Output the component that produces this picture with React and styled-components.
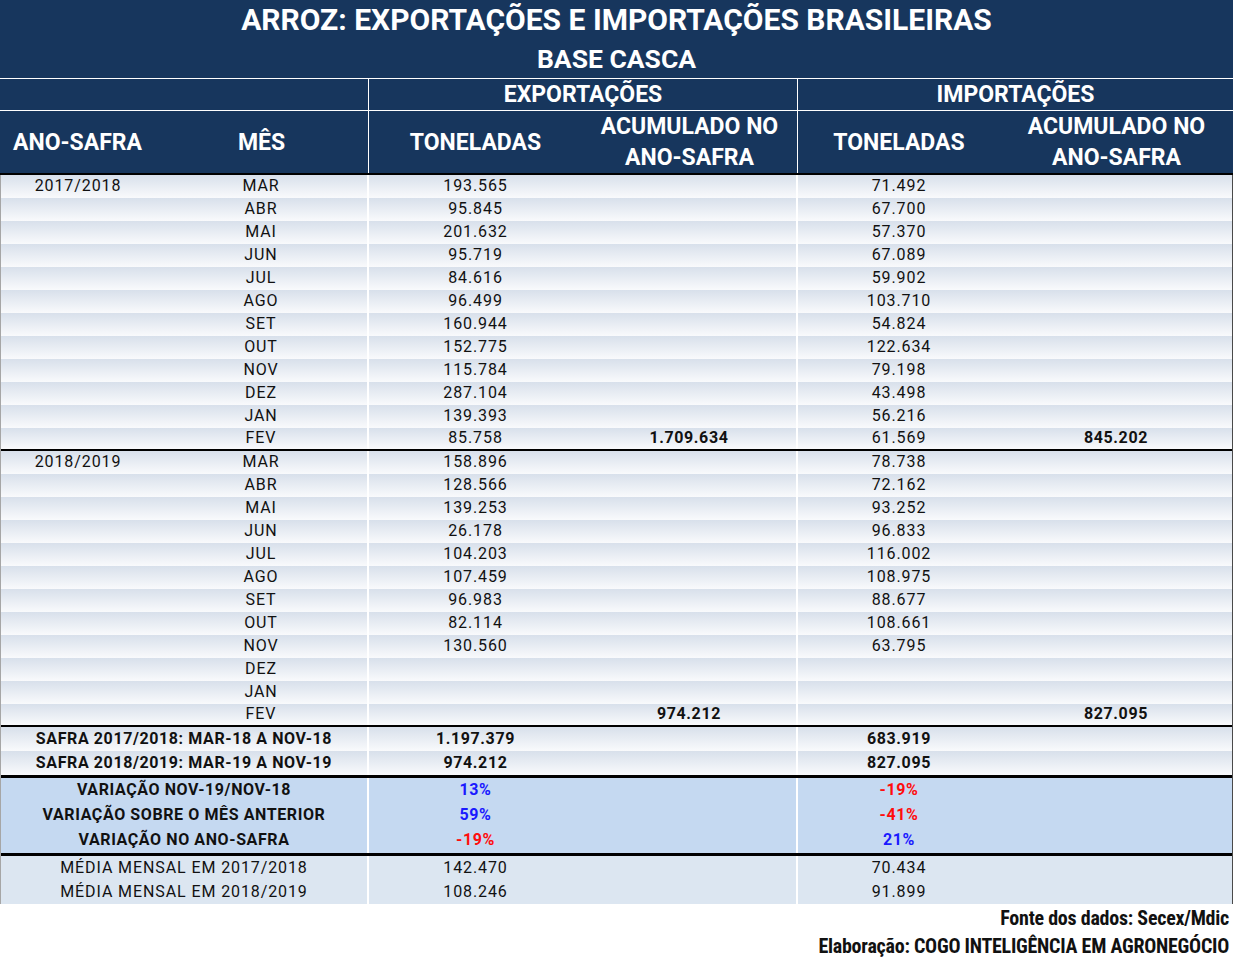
import React from "react";
import styled, { createGlobalStyle, css } from "styled-components";

const GlobalStyle = createGlobalStyle`
  html, body {
    margin: 0;
    padding: 0;
    background: #ffffff;
  }
  body {
    font-family: Roboto, "Liberation Sans", Arial, sans-serif;
    color: #111;
  }
`;

const NAVY = "#17365d";
const COLS = "155px 214px 213px 216px 202px 1fr";

const Sheet = styled.div`
  width: 1233px;
  display: flex;
  flex-direction: column;
`;

const TitleBlock = styled.div`
  background: ${NAVY};
  height: 78px;
  color: #fff;
  display: flex;
  flex-direction: column;
  align-items: center;
  font-weight: 700;
  border-bottom: 1px solid #fff;
`;

const Title = styled.div`
  font-size: 30px;
  line-height: 40px;
`;

const SubTitle = styled.div`
  font-size: 26.5px;
  line-height: 38px;
`;

const HeadRow = styled.div`
  display: grid;
  grid-template-columns: ${COLS};
  background: ${NAVY};
  color: #fff;
  font-weight: 700;
  font-size: 23px;
  height: ${(p) => p.$h}px;
  border-bottom: ${(p) => (p.$dark ? "2px solid #000" : "1px solid #fff")};
`;

const HeadCell = styled.div`
  grid-column: span ${(p) => p.$span || 1};
  display: flex;
  align-items: center;
  justify-content: center;
  text-align: center;
  line-height: 31px;
  border-right: ${(p) => (p.$line ? "1px solid #fff" : "none")};
`;

const Body = styled.div`
  display: flex;
  flex-direction: column;
  border-left: 1px solid #a6a6a6;
  border-right: 1px solid #4a4a4a;
`;

const rowBg = {
  data: css`
    background: linear-gradient(#d8e0eb, #f9fafc);
  `,
  variation: css`
    background: #c5d9f1;
  `,
  media: css`
    background: #dce6f1;
  `,
};

const Row = styled.div`
  display: grid;
  grid-template-columns: 154px 214px 213px 216px 202px 1fr;
  box-sizing: border-box;
  height: ${(p) => p.$h || 23}px;
  font-size: 16px;
  letter-spacing: 0.9px;
  ${(p) => rowBg[p.$kind || "data"]}
  border-bottom: ${(p) => (p.$endLine ? "2px solid #000" : "none")};
`;

const DoubleRule = styled.div`
  height: 3px;
  box-sizing: border-box;
  border-top: 1px solid #000;
  border-bottom: 2px solid #000;
  background: #fff;
`;

const Cell = styled.div`
  grid-column: span ${(p) => p.$span || 1};
  display: flex;
  align-items: center;
  justify-content: center;
  font-weight: ${(p) => (p.$bold ? 700 : 400)};
  color: ${(p) => p.$color || "#111"};
  letter-spacing: ${(p) => (p.$bold ? "0.6px" : "inherit")};
  border-right: ${(p) => (p.$line ? "2px solid #fff" : "none")};
  padding-bottom: 2px;
  box-sizing: border-box;
`;

const Footer = styled.div`
  display: flex;
  flex-direction: column;
  align-items: flex-end;
  padding: 0 4px 0 0;
  font-weight: 700;
  font-size: 20px;
  line-height: 28px;
  color: #111;
  font-stretch: 80%;
  letter-spacing: -0.25px;
`;

const MONTHS = ["MAR", "ABR", "MAI", "JUN", "JUL", "AGO", "SET", "OUT", "NOV", "DEZ", "JAN", "FEV"];

const seasons = [
  {
    year: "2017/2018",
    exp: ["193.565", "95.845", "201.632", "95.719", "84.616", "96.499", "160.944", "152.775", "115.784", "287.104", "139.393", "85.758"],
    imp: ["71.492", "67.700", "57.370", "67.089", "59.902", "103.710", "54.824", "122.634", "79.198", "43.498", "56.216", "61.569"],
    expAcc: "1.709.634",
    impAcc: "845.202",
  },
  {
    year: "2018/2019",
    exp: ["158.896", "128.566", "139.253", "26.178", "104.203", "107.459", "96.983", "82.114", "130.560", "", "", ""],
    imp: ["78.738", "72.162", "93.252", "96.833", "116.002", "108.975", "88.677", "108.661", "63.795", "", "", ""],
    expAcc: "974.212",
    impAcc: "827.095",
  },
];

const BLUE = "#1a1aff";
const RED = "#ff0d0d";

const totals = [
  { label: "SAFRA 2017/2018: MAR-18 A NOV-18", exp: "1.197.379", imp: "683.919" },
  { label: "SAFRA 2018/2019: MAR-19 A NOV-19", exp: "974.212", imp: "827.095" },
];

const variations = [
  { label: "VARIAÇÃO NOV-19/NOV-18", exp: "13%", expC: BLUE, imp: "-19%", impC: RED },
  { label: "VARIAÇÃO SOBRE O MÊS ANTERIOR", exp: "59%", expC: BLUE, imp: "-41%", impC: RED },
  { label: "VARIAÇÃO NO ANO-SAFRA", exp: "-19%", expC: RED, imp: "21%", impC: BLUE },
];

const averages = [
  { label: "MÉDIA MENSAL EM 2017/2018", exp: "142.470", imp: "70.434" },
  { label: "MÉDIA MENSAL EM 2018/2019", exp: "108.246", imp: "91.899" },
];

export default function App() {
  return (
    <>
      <GlobalStyle />
      <Sheet>
        <TitleBlock>
          <Title>ARROZ: EXPORTAÇÕES E IMPORTAÇÕES BRASILEIRAS</Title>
          <SubTitle>BASE CASCA</SubTitle>
        </TitleBlock>

        <HeadRow $h={31}>
          <HeadCell $span={2} $line />
          <HeadCell $span={2} $line>EXPORTAÇÕES</HeadCell>
          <HeadCell $span={2}>IMPORTAÇÕES</HeadCell>
        </HeadRow>
        <HeadRow $h={62} $dark>
          <HeadCell>ANO-SAFRA</HeadCell>
          <HeadCell $line>MÊS</HeadCell>
          <HeadCell>TONELADAS</HeadCell>
          <HeadCell $line>
            ACUMULADO NO
            <br />
            ANO-SAFRA
          </HeadCell>
          <HeadCell>TONELADAS</HeadCell>
          <HeadCell>
            ACUMULADO NO
            <br />
            ANO-SAFRA
          </HeadCell>
        </HeadRow>

        <Body>
          {seasons.map((s) =>
            MONTHS.map((m, i) => {
              const last = i === MONTHS.length - 1;
              return (
                <Row key={s.year + m} $endLine={last}>
                  <Cell>{i === 0 ? s.year : ""}</Cell>
                  <Cell $line>{m}</Cell>
                  <Cell>{s.exp[i]}</Cell>
                  <Cell $line $bold>{last ? s.expAcc : ""}</Cell>
                  <Cell>{s.imp[i]}</Cell>
                  <Cell $bold>{last ? s.impAcc : ""}</Cell>
                </Row>
              );
            })
          )}

          {totals.map((t) => (
            <Row key={t.label} $h={24}>
              <Cell $span={2} $line $bold>{t.label}</Cell>
              <Cell $bold>{t.exp}</Cell>
              <Cell $line />
              <Cell $bold>{t.imp}</Cell>
              <Cell />
            </Row>
          ))}
          <DoubleRule />

          {variations.map((v) => (
            <Row key={v.label} $h={25} $kind="variation">
              <Cell $span={2} $line $bold>{v.label}</Cell>
              <Cell $bold $color={v.expC}>{v.exp}</Cell>
              <Cell $line />
              <Cell $bold $color={v.impC}>{v.imp}</Cell>
              <Cell />
            </Row>
          ))}
          <DoubleRule />

          {averages.map((a) => (
            <Row key={a.label} $h={24} $kind="media">
              <Cell $span={2} $line>{a.label}</Cell>
              <Cell>{a.exp}</Cell>
              <Cell $line />
              <Cell>{a.imp}</Cell>
              <Cell />
            </Row>
          ))}
        </Body>

        <Footer>
          <div>Fonte dos dados: Secex/Mdic</div>
          <div>Elaboração: COGO INTELIGÊNCIA EM AGRONEGÓCIO</div>
        </Footer>
      </Sheet>
    </>
  );
}
